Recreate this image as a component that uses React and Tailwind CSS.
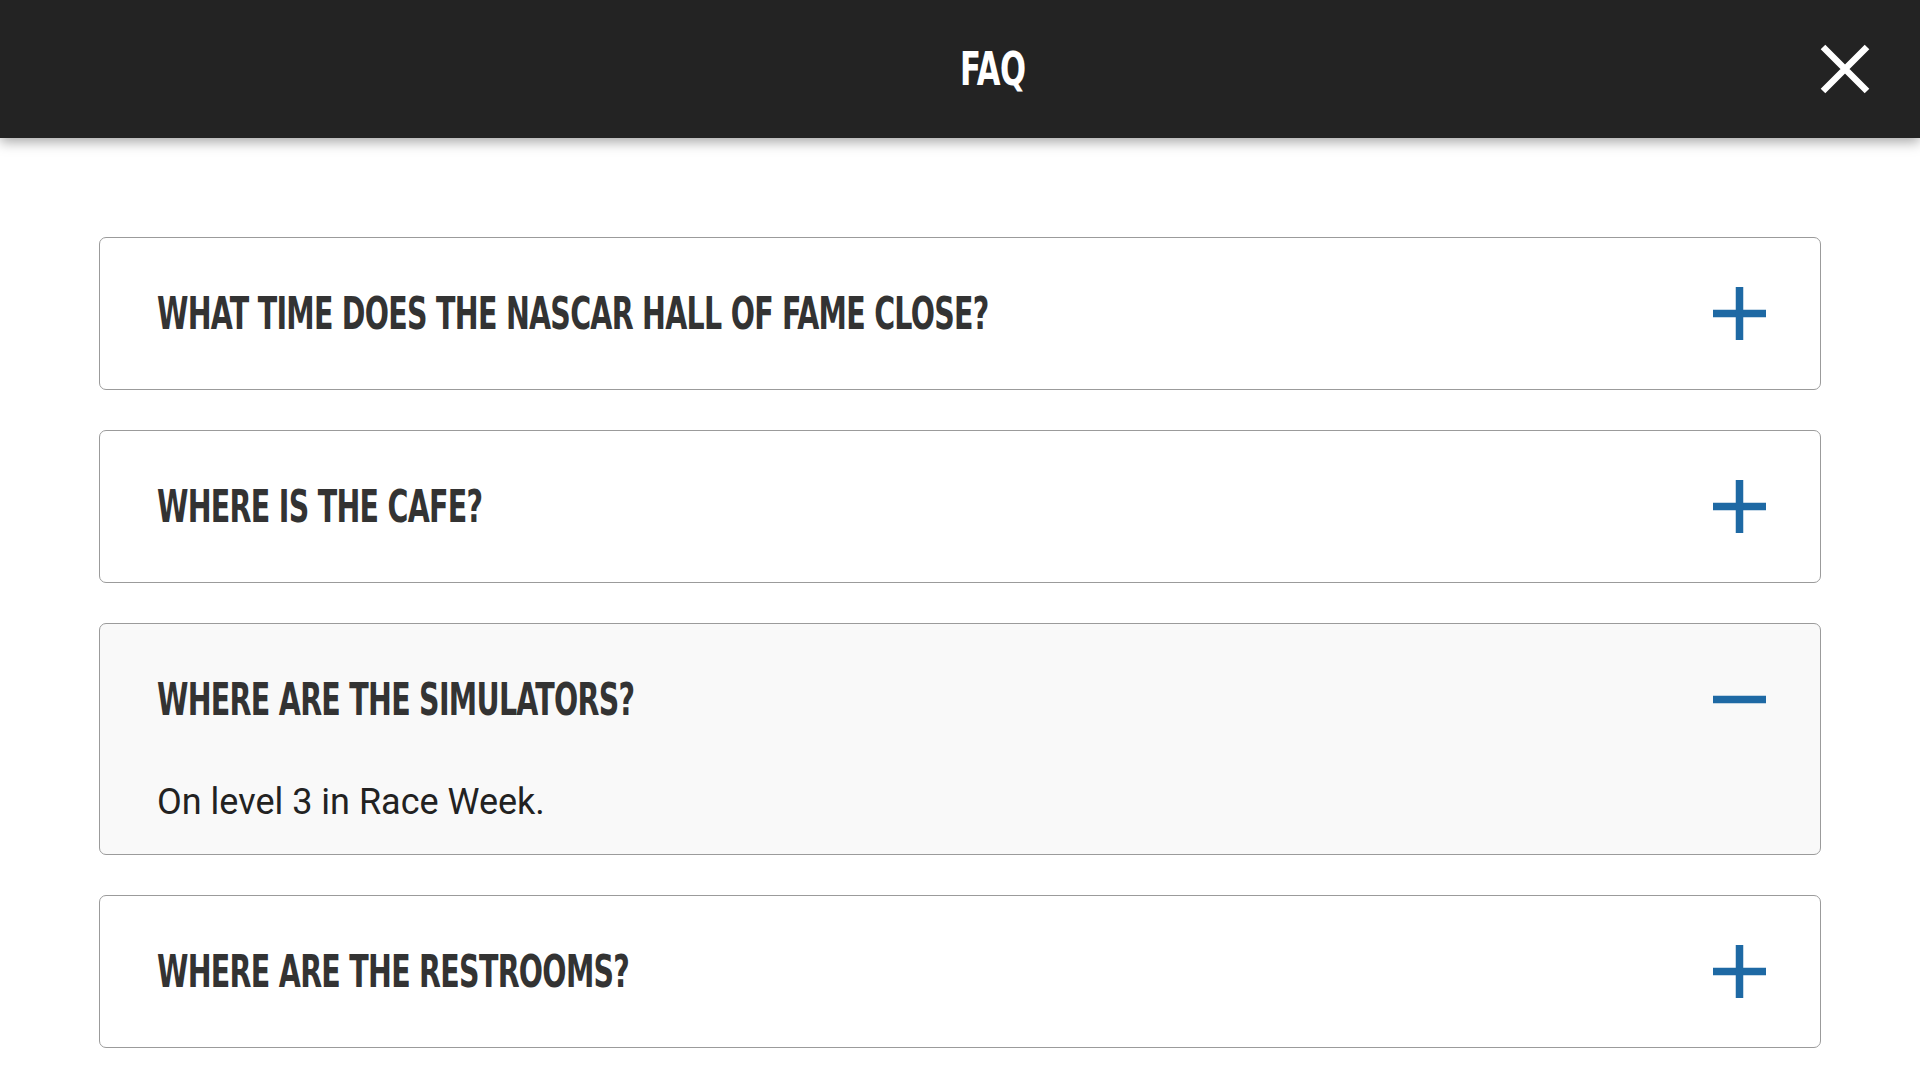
import { useState } from 'react';
import clsx from 'clsx';

const FAQS = [
  { q: 'WHAT TIME DOES THE NASCAR HALL OF FAME CLOSE?', a: 'The Hall of Fame closes at 6 p.m. daily.' },
  { q: 'WHERE IS THE CAFE?', a: 'On level 1, next to the Great Hall.' },
  { q: 'WHERE ARE THE SIMULATORS?', a: 'On level 3 in Race Week.' },
  { q: 'WHERE ARE THE RESTROOMS?', a: 'Restrooms are located on every level.' },
];

// Icons drawn as plain svg so the bar thickness matches
const PlusIcon = () => (
  <svg width="53" height="53" viewBox="0 0 53 53" className="shrink-0">
    <rect x="0" y="22.75" width="53" height="7.5" fill="#1e69a4" />
    <rect x="22.75" y="0" width="7.5" height="53" fill="#1e69a4" />
  </svg>
);

const MinusIcon = () => (
  <svg width="53" height="53" viewBox="0 0 53 53" className="shrink-0">
    <rect x="0" y="22.75" width="53" height="7.5" fill="#1e69a4" />
  </svg>
);

const CloseIcon = () => (
  <svg width="52" height="52" viewBox="0 0 52 52">
    <path d="M4 4 L48 48 M48 4 L4 48" stroke="#ffffff" strokeWidth="6.5" strokeLinecap="butt" />
  </svg>
);

const App = () => {
  const [open, setOpen] = useState(2);

  return (
    <div className="min-h-screen bg-white">
      <header className="relative z-10 flex h-[138px] items-center bg-[#232323] shadow-[0_4px_12px_rgba(0,0,0,0.35)]">
        <div className="w-1/2" />
        <div className="flex flex-1 items-center justify-between pr-[49px]">
          <h1 className="inline-block origin-left scale-x-[0.74] font-['DejaVu_Sans_Condensed','DejaVu_Sans',sans-serif] text-[46px] font-bold leading-none tracking-[-0.5px] text-white">
            FAQ
          </h1>
          <button type="button" aria-label="Close" className="flex items-center justify-center">
            <CloseIcon />
          </button>
        </div>
      </header>

      <main className="flex flex-col gap-[40px] px-[99px] pt-[99px] pb-10">
        {FAQS.map((item, i) => {
          const isOpen = open === i;
          return (
            <div
              key={item.q}
              className={clsx(
                'rounded-[7px] border border-[#9b9b9b]',
                isOpen ? 'bg-[#f9f9f9]' : 'bg-white'
              )}
            >
              <button
                type="button"
                onClick={() => setOpen(isOpen ? null : i)}
                className="flex h-[151px] w-full items-center justify-between pl-[57px] pr-[54px] text-left"
              >
                <span className="inline-block origin-left scale-x-[0.72] whitespace-nowrap font-['DejaVu_Sans_Condensed','DejaVu_Sans',sans-serif] text-[44px] font-bold leading-none tracking-[-1px] text-[#333333]">
                  {item.q}
                </span>
                {isOpen ? <MinusIcon /> : <PlusIcon />}
              </button>
              {isOpen && (
                <p className="pl-[57px] pb-[25px] font-['Roboto',sans-serif] text-[36px] leading-[54px] text-[#222222]">
                  {item.a}
                </p>
              )}
            </div>
          );
        })}
      </main>
    </div>
  );
};

export default App;
